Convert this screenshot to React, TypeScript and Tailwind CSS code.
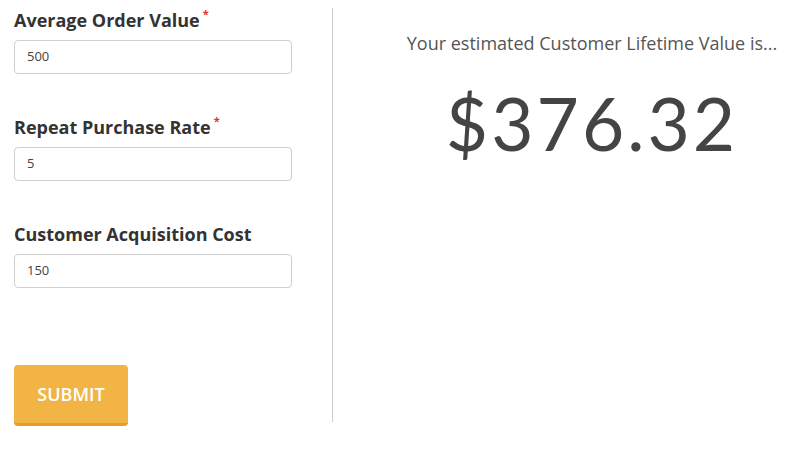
import React from "react";

function Field({ label, value, required }: { label: string; value: string; required?: boolean }) {
  return (
    <div className="flex flex-col">
      <div className="flex items-start h-[28px] text-[18px] font-bold text-[#333] leading-[28px]">
        <span>{label}</span>
        {required && <span className="text-[#e0313b] text-[11px] leading-[16px] ml-[3px]">*</span>}
      </div>
      <div className="mt-[6px] w-[278px] h-[34px] border border-[#cfcfcf] rounded-[4px] flex items-center pl-[12px] text-[13px] text-[#444]">
        {value}
      </div>
    </div>
  );
}

export default function App() {
  return (
    <div className="w-[795px] h-[450px] bg-white flex" style={{ fontFamily: "'Open Sans', Lato, sans-serif" }}>
      <div className="w-[332px] pl-[14px] pt-[6px] flex flex-col">
        <div className="flex flex-col gap-[39px]">
          <Field label="Average Order Value" value="500" required />
          <Field label="Repeat Purchase Rate" value="5" required />
          <Field label="Customer Acquisition Cost" value="150" />
        </div>
        <button className="mt-[77px] w-[114px] h-[61px] bg-[#f2b444] border-b-[3px] border-[#e89a2a] rounded-[4px] text-white font-semibold text-[18px]">
          SUBMIT
        </button>
      </div>
      <div className="mt-[8px] h-[414px] w-px bg-[#cccccc]" />
      <div className="flex-1 flex flex-col items-center pl-[56px]">
        <div className="mt-[30px] text-[18px] text-[#555]">Your estimated Customer Lifetime Value is...</div>
        <div className="mt-[24px] text-[73px] leading-[84px] tracking-[3px] text-[#444]" style={{ fontFamily: "Lato, sans-serif" }}>$376.32</div>
      </div>
    </div>
  );
}
